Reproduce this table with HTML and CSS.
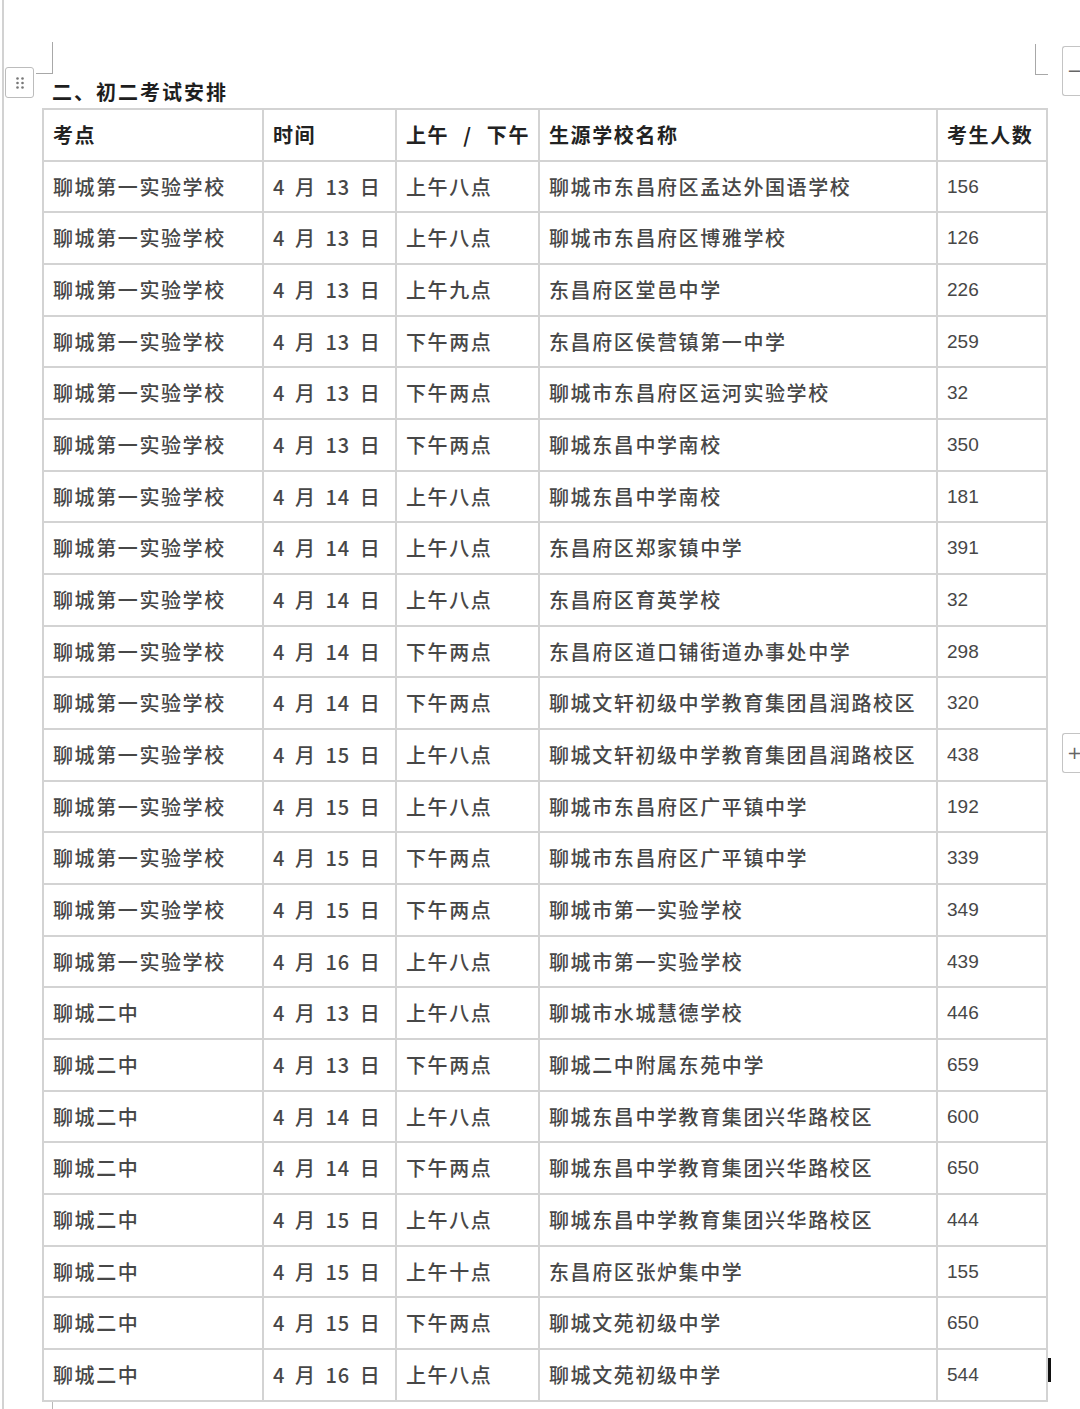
FILE: index.html
```html
<!DOCTYPE html>
<html lang="zh-CN">
<head>
<meta charset="utf-8">
<title>初二考试安排</title>
<link rel="stylesheet" href="styles.css">
</head>
<body>
<div class="page">
  <div class="mark mark-tl"></div>
  <div class="mark mark-tr"></div>
  <div class="handle">
    <svg width="10" height="14" viewBox="0 0 10 14"><g fill="#777"><circle cx="2.5" cy="2.5" r="1.3"/><circle cx="7.5" cy="2.5" r="1.3"/><circle cx="2.5" cy="7" r="1.3"/><circle cx="7.5" cy="7" r="1.3"/><circle cx="2.5" cy="11.5" r="1.3"/><circle cx="7.5" cy="11.5" r="1.3"/></g></svg>
  </div>
  <div class="side-btn side-minus">−</div>
  <div class="side-btn side-plus">+</div>
  <div class="cursor"></div>

  <div class="content">
    <h2 class="title">二、初二考试安排</h2>
    <table class="exam">
      <colgroup>
        <col class="c1"><col class="c2"><col class="c3"><col class="c4"><col class="c5">
      </colgroup>
      <thead>
        <tr><th>考点</th><th>时间</th><th class="ampm">上午 / 下午</th><th>生源学校名称</th><th>考生人数</th></tr>
      </thead>
      <tbody>
        <tr><td>聊城第一实验学校</td><td class="d">4 月 13 日</td><td>上午八点</td><td>聊城市东昌府区孟达外国语学校</td><td class="n">156</td></tr>
        <tr><td>聊城第一实验学校</td><td class="d">4 月 13 日</td><td>上午八点</td><td>聊城市东昌府区博雅学校</td><td class="n">126</td></tr>
        <tr><td>聊城第一实验学校</td><td class="d">4 月 13 日</td><td>上午九点</td><td>东昌府区堂邑中学</td><td class="n">226</td></tr>
        <tr><td>聊城第一实验学校</td><td class="d">4 月 13 日</td><td>下午两点</td><td>东昌府区侯营镇第一中学</td><td class="n">259</td></tr>
        <tr><td>聊城第一实验学校</td><td class="d">4 月 13 日</td><td>下午两点</td><td>聊城市东昌府区运河实验学校</td><td class="n">32</td></tr>
        <tr><td>聊城第一实验学校</td><td class="d">4 月 13 日</td><td>下午两点</td><td>聊城东昌中学南校</td><td class="n">350</td></tr>
        <tr><td>聊城第一实验学校</td><td class="d">4 月 14 日</td><td>上午八点</td><td>聊城东昌中学南校</td><td class="n">181</td></tr>
        <tr><td>聊城第一实验学校</td><td class="d">4 月 14 日</td><td>上午八点</td><td>东昌府区郑家镇中学</td><td class="n">391</td></tr>
        <tr><td>聊城第一实验学校</td><td class="d">4 月 14 日</td><td>上午八点</td><td>东昌府区育英学校</td><td class="n">32</td></tr>
        <tr><td>聊城第一实验学校</td><td class="d">4 月 14 日</td><td>下午两点</td><td>东昌府区道口铺街道办事处中学</td><td class="n">298</td></tr>
        <tr><td>聊城第一实验学校</td><td class="d">4 月 14 日</td><td>下午两点</td><td>聊城文轩初级中学教育集团昌润路校区</td><td class="n">320</td></tr>
        <tr><td>聊城第一实验学校</td><td class="d">4 月 15 日</td><td>上午八点</td><td>聊城文轩初级中学教育集团昌润路校区</td><td class="n">438</td></tr>
        <tr><td>聊城第一实验学校</td><td class="d">4 月 15 日</td><td>上午八点</td><td>聊城市东昌府区广平镇中学</td><td class="n">192</td></tr>
        <tr><td>聊城第一实验学校</td><td class="d">4 月 15 日</td><td>下午两点</td><td>聊城市东昌府区广平镇中学</td><td class="n">339</td></tr>
        <tr><td>聊城第一实验学校</td><td class="d">4 月 15 日</td><td>下午两点</td><td>聊城市第一实验学校</td><td class="n">349</td></tr>
        <tr><td>聊城第一实验学校</td><td class="d">4 月 16 日</td><td>上午八点</td><td>聊城市第一实验学校</td><td class="n">439</td></tr>
        <tr><td>聊城二中</td><td class="d">4 月 13 日</td><td>上午八点</td><td>聊城市水城慧德学校</td><td class="n">446</td></tr>
        <tr><td>聊城二中</td><td class="d">4 月 13 日</td><td>下午两点</td><td>聊城二中附属东苑中学</td><td class="n">659</td></tr>
        <tr><td>聊城二中</td><td class="d">4 月 14 日</td><td>上午八点</td><td>聊城东昌中学教育集团兴华路校区</td><td class="n">600</td></tr>
        <tr><td>聊城二中</td><td class="d">4 月 14 日</td><td>下午两点</td><td>聊城东昌中学教育集团兴华路校区</td><td class="n">650</td></tr>
        <tr><td>聊城二中</td><td class="d">4 月 15 日</td><td>上午八点</td><td>聊城东昌中学教育集团兴华路校区</td><td class="n">444</td></tr>
        <tr><td>聊城二中</td><td class="d">4 月 15 日</td><td>上午十点</td><td>东昌府区张炉集中学</td><td class="n">155</td></tr>
        <tr><td>聊城二中</td><td class="d">4 月 15 日</td><td>下午两点</td><td>聊城文苑初级中学</td><td class="n">650</td></tr>
        <tr><td>聊城二中</td><td class="d">4 月 16 日</td><td>上午八点</td><td>聊城文苑初级中学</td><td class="n">544</td></tr>
      </tbody>
    </table>
    <div class="next-page"></div>
  </div>
</div>
</body>
</html>
```

FILE: styles.css
```css
* { box-sizing: border-box; }

html, body {
  margin: 0;
  padding: 0;
  background: #ffffff;
}

body {
  width: 1080px;
  height: 1409px;
  overflow: hidden;
  font-family: "Noto Sans CJK SC", "Noto Sans", sans-serif;
  color: #4a4a4a;
}

.page {
  position: relative;
  margin-left: 2px;
  height: 1409px;
  border-left: 2px solid #d2d2d2;
}

.content {
  padding: 78px 0 0 38px;
}

.title {
  margin: 0 0 2px 0;
  padding-left: 10px;
  height: 28px;
  line-height: 28px;
  font-size: 20px;
  font-weight: 700;
  letter-spacing: 2px;
  color: #1e1e1e;
}

.exam {
  width: 1004px;
  border-collapse: collapse;
  table-layout: fixed;
}

.c1 { width: 220px; }
.c2 { width: 133px; }
.c3 { width: 143px; }
.c4 { width: 398px; }
.c5 { width: 110px; }

.exam th,
.exam td {
  border: 2px solid #d3d3d3;
  height: 51.68px;
  padding: 0 0 0 9px;
  text-align: left;
  vertical-align: middle;
  font-size: 20px;
  line-height: 24px;
  letter-spacing: 1.6px;
  white-space: nowrap;
  overflow: hidden;
}

.exam th {
  font-weight: 700;
  color: #222222;
}

.exam th.ampm {
  word-spacing: 8px;
}

.exam td {
  font-weight: 500;
  color: #474747;
}

.exam td.d {
  word-spacing: 4px;
  letter-spacing: 1px;
}

.exam td.n {
  letter-spacing: 0;
  font-family: "Liberation Sans", "Noto Sans", sans-serif;
  font-weight: 400;
  font-size: 19px;
}

.next-page {
  margin-left: 10px;
  width: 0;
  height: 10px;
  border-left: 1px solid #b8b8b8;
}

/* overlays: crop marks, handle, side buttons, caret */
.mark {
  position: absolute;
  border-color: #a8a8a8;
  border-style: solid;
  border-width: 0;
}

.mark-tl {
  left: 32px;
  top: 42px;
  width: 17px;
  height: 32px;
  border-right-width: 1px;
  border-bottom-width: 1px;
}

.mark-tr {
  left: 1031px;
  top: 44px;
  width: 13px;
  height: 31px;
  border-left-width: 1px;
  border-bottom-width: 1px;
}

.handle {
  position: absolute;
  left: 1px;
  top: 67px;
  width: 29px;
  height: 31px;
  border: 1px solid #bcbcbc;
  border-radius: 3px;
  background: #ffffff;
  display: flex;
  align-items: center;
  justify-content: center;
}

.side-btn {
  position: absolute;
  border: 1px solid #c4c4c4;
  border-right: 0;
  border-radius: 3px 0 0 3px;
  background: #ffffff;
  color: #666666;
  font-family: "DejaVu Sans", sans-serif;
  font-size: 18px;
  line-height: 1;
  display: flex;
  align-items: center;
  padding-left: 4px;
}

.side-minus {
  left: 1058px;
  top: 46px;
  width: 22px;
  height: 50px;
}

.side-plus {
  left: 1058px;
  top: 733px;
  width: 22px;
  height: 40px;
}

.cursor {
  position: absolute;
  left: 1044px;
  top: 1358px;
  width: 3px;
  height: 24px;
  background: #111111;
}
```
